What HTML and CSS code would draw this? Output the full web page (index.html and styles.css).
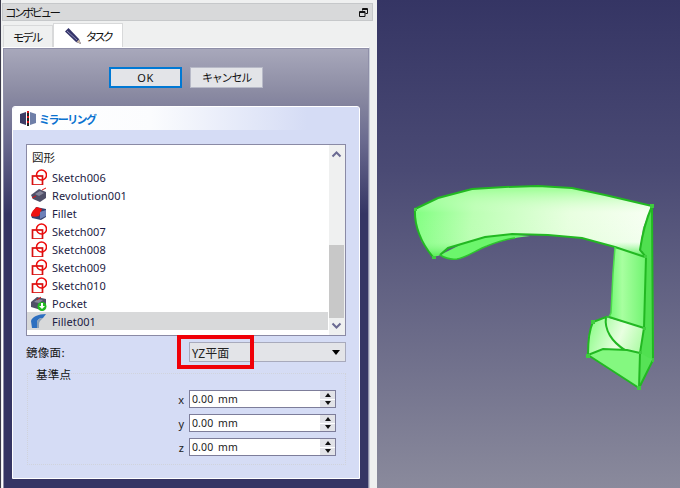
FILE: index.html
```html
<!DOCTYPE html>
<html lang="ja">
<head>
<meta charset="utf-8">
<title>コンボビュー</title>
<link rel="stylesheet" href="styles.css">
</head>
<body>
<div class="page">
  <aside class="dock">
    <header class="title">
      <span class="title-text">コンボビュー</span>
      <svg class="restore" width="9" height="9" viewBox="0 0 9 9"><path class="ico-line" d="M3.500 2.500V.500h5v5h-2M.500 3.500h5.500v5H.500zM.500 4.500H6M3.500 1.500h5"/></svg>
    </header>
    <nav class="tabs">
      <div class="tab tab-off">モデル</div>
      <div class="tab tab-on">
        <svg width="17" height="16" viewBox="0 0 17 16"><path class="pen" d="M3.500 0 0 3.500 11 14l5 2-2-5z"/><path class="pen-hi" d="M2 3l10 9"/><path class="pen-tip" d="M11.500 14l4.500 2-2-4.500z"/></svg>
        <span>タスク</span>
      </div>
    </nav>
    <section class="panel">
      <div class="inner">
        <div class="actions">
          <button class="btn btn-ok">OK</button>
          <button class="btn">キャンセル</button>
        </div>
        <div class="group">
          <div class="group-head">
            <svg width="17" height="15" viewBox="0 0 17 15"><path class="mir-l" d="M0 3l6-2v13l-6-2z"/><path class="mir-r" d="M16 3l-6-2v13l6-2z"/><path class="mir-axis" d="M8 0v2M8 5v2M8 10v2"/><path class="mir-axis2" d="M8 2v3M8 7v3M8 12v3"/></svg>
            <span class="group-title">ミラーリング</span>
          </div>
          <div class="group-body">
            <div class="list">
              <div class="items">
                <div class="cap">図形</div>
                <div class="row"><svg class="ic" viewBox="0 0 16 16"><use href="#sk"/></svg><span>Sketch006</span></div>
                <div class="row"><svg class="ic" viewBox="0 0 16 16"><path class="box-d" d="M0 8l8-6 7 3v6l-6 4-7-3z"/><path class="box-m" d="M4 7l5-3 4 2-5 3z"/><path class="red-l" d="M1 11l4-2M11 3l4-2"/></svg><span>Revolution001</span></div>
                <div class="row"><svg class="ic" viewBox="0 0 16 16"><path class="box-b" d="M0 10l5-8 10 2v8l-5 3-9-2z"/><path class="red-f" d="M0 11c0-4 3-7 6-9l5 2-3 7c-3 1-6 1-8 0z"/><path class="box-l" d="M9 7l6-2v6l-6 3z"/></svg><span>Fillet</span></div>
                <div class="row"><svg class="ic" viewBox="0 0 16 16"><use href="#sk"/></svg><span>Sketch007</span></div>
                <div class="row"><svg class="ic" viewBox="0 0 16 16"><use href="#sk"/></svg><span>Sketch008</span></div>
                <div class="row"><svg class="ic" viewBox="0 0 16 16"><use href="#sk"/></svg><span>Sketch009</span></div>
                <div class="row"><svg class="ic" viewBox="0 0 16 16"><use href="#sk"/></svg><span>Sketch010</span></div>
                <div class="row"><svg class="ic" viewBox="0 0 16 16"><path class="box-d" d="M0 7l6-5 9 2v7l-5 4-10-3z"/><path class="box-m" d="M3 7l4-3 5 1-4 3z"/><path class="red-l" d="M6 5l4-3"/><circle class="grn-c" cx="11" cy="11.500" r="4.500"/><path class="wht-f" d="M10 8h2v3h2l-3 3-3-3h2z"/></svg><span>Pocket</span></div>
                <div class="row row-on"><svg class="ic" viewBox="0 0 16 16"><path class="blu-f" d="M0 8c1-4 7-7 15-7l-3 4c-4 0-6 2-6 5v5H1z"/><path class="blu-l" d="M6 10c0-3 2-5 6-5l-2 2c-1 1-2 2-2 4v4H6z"/></svg><span>Fillet001</span></div>
              </div>
              <div class="scroll">
                <svg class="arrow-up" width="15" height="20" viewBox="0 0 15 20"><path class="chev" d="M3.500 11.500l4-4 4 4"/></svg>
                <div class="thumb"></div>
                <svg class="arrow-dn" width="15" height="17" viewBox="0 0 15 17"><path class="chev" d="M3.500 5.500l4 4 4-4"/></svg>
              </div>
            </div>
            <div class="plane">
              <label class="plane-label">鏡像面:</label>
              <div class="combo">
                <span>YZ平面</span>
                <svg width="8" height="5" viewBox="0 0 8 5"><path d="M0 0h8L4 5z"/></svg>
                <div class="mark"></div>
              </div>
            </div>
            <div class="base">
              <div class="legend">基準点</div>
              <div class="spin-row"><span class="axis">x</span><div class="spin"><span class="val">0.00 mm</span><div class="steps"><i class="up"></i><i class="dn"></i></div></div></div>
              <div class="spin-row"><span class="axis">y</span><div class="spin"><span class="val">0.00 mm</span><div class="steps"><i class="up"></i><i class="dn"></i></div></div></div>
              <div class="spin-row"><span class="axis">z</span><div class="spin"><span class="val">0.00 mm</span><div class="steps"><i class="up"></i><i class="dn"></i></div></div></div>
            </div>
          </div>
        </div>
      </div>
    </section>
  </aside>
  <main class="view">
    <svg class="model" width="303" height="488" viewBox="377 0 303 488">
      <defs>
        <linearGradient id="arch" x1="415" y1="200" x2="650" y2="240" gradientUnits="userSpaceOnUse">
          <stop offset="0" stop-color="#80ff80"/>
          <stop offset=".25" stop-color="#bcffb4"/>
          <stop offset=".65" stop-color="#e8ffe0"/>
          <stop offset="1" stop-color="#f8fff4"/>
        </linearGradient>
        <linearGradient id="archv" x1="0" y1="190" x2="0" y2="255" gradientUnits="userSpaceOnUse">
          <stop offset="0" stop-color="#a0ff98" stop-opacity=".9"/>
          <stop offset=".35" stop-color="#d8ffd0" stop-opacity="0"/>
          <stop offset=".8" stop-color="#8cf88c" stop-opacity=".05"/>
          <stop offset="1" stop-color="#5cf05c" stop-opacity=".95"/>
        </linearGradient>
        <linearGradient id="pill" x1="612" y1="0" x2="646" y2="0" gradientUnits="userSpaceOnUse">
          <stop offset="0" stop-color="#7cfa7c"/>
          <stop offset=".3" stop-color="#a8ffa0"/>
          <stop offset="1" stop-color="#70f470"/>
        </linearGradient>
        <linearGradient id="flare" x1="590" y1="325" x2="640" y2="345" gradientUnits="userSpaceOnUse">
          <stop offset="0" stop-color="#90fc8c"/>
          <stop offset=".6" stop-color="#e8ffe0"/>
          <stop offset="1" stop-color="#b4fcac"/>
        </linearGradient>
        <g id="sk"><rect class="sk-r" x="1.500" y="7" width="10" height="9"/><circle class="sk-c" cx="10.500" cy="6" r="5"/></g>
      </defs>
      <path class="m-strip" d="M652 206 654 360 639 388 640 353 644 328 646 257 640 248 643 228z"/>
      <path class="m-pillar" d="M615 247 646 257 644 328 609 317 611 313 613 273z"/>
      <path class="m-under" d="M440 255C445 258 450 260 457 259 468 257 476 250 487 246 500 241 512 238 530 236L505 234 470 240z"/>
      <path class="m-arch" d="M415 209 438 198 472 189 505 187 538 186 572 188 605 195 652 206 643 228 640 248 645 257 615 247 582 238 548 235 512 234 485 237 448 248 440 255 433 257 422 242 416 225z"/>
      <path class="m-arch-v" d="M415 209 438 198 472 189 505 187 538 186 572 188 605 195 652 206 643 228 640 248 645 257 615 247 582 238 548 235 512 234 485 237 448 248 440 255 433 257 422 242 416 225z"/>
      <path class="m-flare" d="M593 322 606 317 644 328 640 353 627 350 603 349 588 355 588 338z"/>
      <path class="m-foot" d="M588 355 603 349 627 350 640 353 639 388z"/>
      <path class="m-foot-r" d="M640 353 653 360 639 388z"/>
      <path class="m-edge" d="M652 206 605 195 572 188 538 186 505 187 472 189 438 198 415 209C414 225 421 243 433 257"/>
      <path class="m-edge" d="M440 255 448 248 485 237 512 234 548 235 582 238 615 247 645 257"/>
      <path class="m-edge-t" d="M440 255C445 258 450 260 457 259 468 257 476 250 487 246 497 242 505 239 515 238"/>
      <path class="m-edge" d="M652 206C645 222 642 236 640 250L646 257 644 328 640 353 639 388 653 360 652 206"/>
      <path class="m-edge-s" d="M615 247 613 273 611 313 609 317"/>
      <path class="m-edge" d="M609 317 644 328"/>
      <path class="m-edge" d="M593 322 606 317C604 330 612 342 625 350M593 322C589 330 588 340 588 355L603 349 627 350 640 353M588 355 639 388"/>
      <path class="m-edge-t" d="M606 317 609 317"/>
      <g class="m-dots">
        <rect x="414" y="208" width="3" height="3"/><rect x="432" y="256" width="4" height="3"/><rect x="650" y="204" width="4" height="4"/><rect x="644" y="255" width="3" height="3"/><rect x="591" y="320" width="4" height="4"/><rect x="586" y="354" width="4" height="4"/><rect x="637" y="386" width="4" height="4"/><rect x="639" y="351" width="3" height="3"/><rect x="652" y="358" width="2" height="4"/><rect x="643" y="327" width="3" height="3"/>
      </g>
    </svg>
  </main>
</div>
</body>
</html>
```
FILE: styles.css
```css
* { box-sizing: border-box; }
html, body { margin: 0; padding: 0; height: 100%; overflow: hidden; }
body { font-family: "Noto Sans CJK JP", "Noto Sans", sans-serif; color: #111; background: #333; }
.page { display: flex; width: 680px; height: 488px; overflow: hidden; }

.dock {
  width: 377px; flex: none; display: flex; flex-direction: column;
  background: #eff0f0; border-left: 1px solid #3a3a4a; padding-top: 3px;
}
.title {
  height: 18px; margin: 0 4px 0 1px; padding: 0 4px 0 2px;
  display: flex; align-items: center; justify-content: space-between;
  background: #d8d9da; border: 1px solid #c6c8ca;
  font-size: 11.500px; letter-spacing: -2.600px;
}
.title-text { line-height: 16px; }
.ico-line { fill: none; stroke: #111; stroke-width: 1; }

.tabs { display: flex; height: 24px; margin-top: 2px; padding-left: 2px; align-items: flex-end; font-size: 11.500px; letter-spacing: -2px; }
.tab {
  width: 50px; height: 22px; display: flex; align-items: center; justify-content: center;
  background: #eff0f0; border: 1px solid #d8d9da; border-bottom: 0;
}
.tab-off { padding-right: 2px; }
.tab-on { width: 70px; height: 24px; background: #fff; gap: 4px; letter-spacing: -3px; }
.pen { fill: #34346a; }
.pen-tip { fill: #c9b7a0; }
.pen-hi { stroke: #8c8cb8; fill: none; }

.panel { flex: 1; min-height: 0; margin: 0 7px 0 1px; border: 1px solid #fff; border-bottom: 0; border-right-color: #c8ccd8; }
.inner {
  height: 100%; padding: 18px 8px 0 8px; border: 1px solid #8f8fa8; border-bottom: 0;
  background: linear-gradient(180deg, #a8a8bb 0, #8a8aa2 45px, #6c6c90 90px, #353564 165px);
}
.actions { display: flex; justify-content: center; gap: 8px; }
.btn {
  width: 73px; height: 21px; padding: 0; margin: 0;
  font-family: "Noto Sans CJK JP", sans-serif; font-size: 11px; line-height: 17px; letter-spacing: -1.200px; color: #111;
  background: #e3e4e8; border: 1px solid #b8bac8;
}
.btn-ok { border: 2px solid #0078d4; font-family: "Noto Sans", sans-serif; font-size: 11px; letter-spacing: .500px; font-weight: 400; }

.group { margin-top: 18px; width: 348px; height: 373px; border: 1px solid #fff; border-radius: 3px 3px 0 0; background: #d5dcf5; }
.group-head {
  height: 23px; display: flex; align-items: center; gap: 2px; padding-left: 7px;
  background: linear-gradient(90deg, #fff 0, #fbfcfe 40%, #d5dcf5 85%);
  border-radius: 3px 3px 0 0;
}
.group-title { font-size: 11px; font-weight: 700; color: #0a72d0; letter-spacing: -1.600px; }
.mir-l { fill: #3e3e66; }
.mir-r { fill: #6f7fa8; }
.mir-axis { stroke: #d4141c; stroke-width: 2; fill: none; }
.mir-axis2 { stroke: #222; stroke-width: 2; fill: none; }
.group-body { padding: 14px 13px 0 13px; }

.list { height: 192px; display: flex; border: 1px solid #8a8aa5; background: #fff; }
.items { flex: 1; padding: 3px 1px 0 0; font-family: "Noto Sans", sans-serif; font-size: 11px; color: #1c1c44; }
.cap { height: 18px; margin: 0 0 2px 5px; line-height: 18px; font-family: "Noto Sans CJK JP", sans-serif; font-size: 11.500px; color: #222; }
.row { height: 18px; display: flex; align-items: center; gap: 5px; padding-left: 4px; line-height: 18px; letter-spacing: .080px; }
.row span { padding-top: 1px; }
.row-on { background: #d8d9da; }
.ic { width: 16px; height: 16px; flex: none; }
.scroll { width: 16px; display: flex; flex-direction: column; background: #eff0f0; }
.thumb { width: 15px; height: 73px; margin-top: auto; background: #c8c8c8; }
.arrow-up, .arrow-dn { display: block; flex: none; }
.chev { fill: none; stroke: #6a6a92; stroke-width: 2; }
.sk-r, .sk-c { fill: none; stroke: #ee0a0a; stroke-width: 1.500; }
.sk-r { stroke: #d81010; stroke-width: 1.700; }
.box-d { fill: #4f4f68; }
.box-m { fill: #85859a; }
.box-b { fill: #34406e; }
.box-l { fill: #6d80b8; }
.red-f { fill: #ee1111; }
.red-l { stroke: #e01010; fill: none; }
.grn-c { fill: #22bb22; }
.wht-f { fill: #fff; }
.blu-f { fill: #2d6fc0; }
.blu-l { fill: #8aa0b8; }

.plane { display: flex; align-items: center; height: 20px; margin-top: 6px; }
.plane-label { width: 163px; font-size: 11.500px; letter-spacing: .300px; color: #111; }
.combo {
  flex: 1; height: 20px; display: flex; align-items: center; justify-content: space-between;
  padding: 0 4px 0 2px; background: #e3e4e8; border: 1px solid #a8aabc;
  font-size: 12px; color: #222; position: relative;
}
.combo svg { margin-right: 1px; }
.mark { position: absolute; left: -13px; top: -8px; width: 77px; height: 34px; border: 4px solid #f00008; }

.base { margin: 11px 0 0 1px; height: 92px; border: 1px dotted #d0d3dc; padding: 0 9px 0 0; }
.legend { height: 16px; margin: -8px 0 8px 8px; font-size: 11.500px; letter-spacing: .300px; color: #111; line-height: 16px; }
.spin-row { display: flex; align-items: center; justify-content: flex-end; gap: 5px; height: 18px; margin-bottom: 6px; }
.axis { font-family: "Noto Sans", sans-serif; font-size: 11px; color: #222; }
.spin {
  width: 147px; height: 18px; display: flex; align-items: center; justify-content: space-between;
  background: #fff; border: 1px solid #7d7d9a; padding-left: 2px;
  font-family: "Noto Sans", sans-serif; font-size: 10.500px; letter-spacing: .100px; word-spacing: 2px; color: #222;
}
.steps { width: 15px; height: 16px; display: flex; flex-direction: column; gap: 1px; }
.steps i { flex: 1; position: relative; display: flex; align-items: center; justify-content: center; background: #e2e3e8; }
.steps i::after { content: ""; width: 0; height: 0; border-left: 3.500px solid transparent; border-right: 3.500px solid transparent; }
.up::after { border-bottom: 4px solid #111; }
.dn::after { border-top: 4px solid #111; }

.view { flex: 1; min-width: 0; background: linear-gradient(180deg, #353564 0, #4a4a74 170px, #6a6a88 330px, #8a8a9c 488px); }
.model { display: block; }
.m-strip { fill: #50e050; }
.m-pillar { fill: url(#pill); }
.m-under { fill: #6cf66c; }
.m-arch { fill: url(#arch); }
.m-arch-v { fill: url(#archv); }
.m-flare { fill: url(#flare); }
.m-foot { fill: #84f880; }
.m-foot-r { fill: #56e256; }
.m-edge { fill: none; stroke: #22b822; stroke-width: 2; }
.m-edge-t { fill: none; stroke: #2ec42e; stroke-width: 1.500; }
.m-edge-s { fill: none; stroke: #4cdc4c; stroke-width: 1.500; }
.m-dots { fill: #3ecc3e; }
```
